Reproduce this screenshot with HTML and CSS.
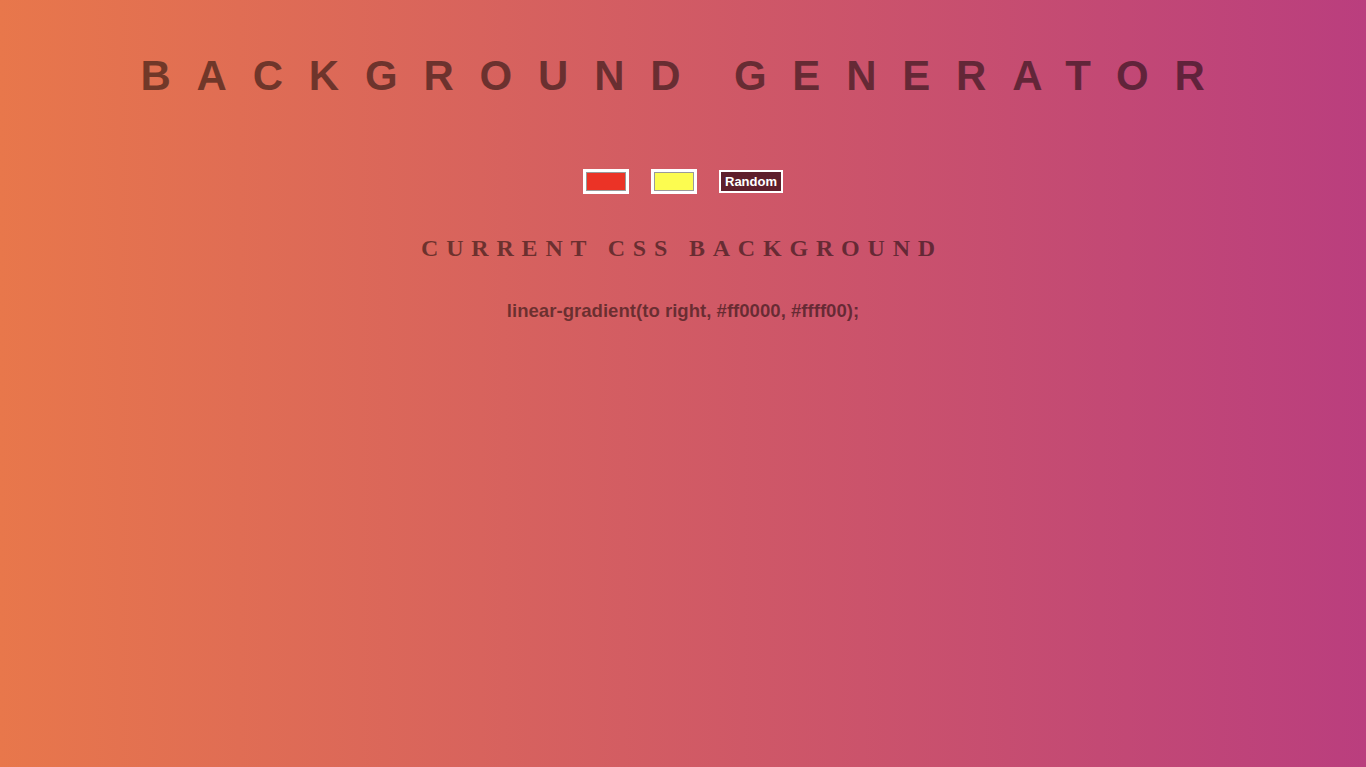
FILE: index.html
```html
<!DOCTYPE html>
<html lang="en">
<head>
<meta charset="utf-8">
<title>Background Generator</title>
<link rel="stylesheet" href="styles.css">
</head>
<body>
<main class="page">
  <h1 class="title">Background Generator</h1>
  <div class="controls">
    <input class="picker" type="color" name="color1" value="#eb3326">
    <input class="picker" type="color" name="color2" value="#fcfc50">
    <button class="random" type="button">Random</button>
  </div>
  <h2 class="subtitle">Current CSS Background</h2>
  <h3 class="code">linear-gradient(to right, #ff0000, #ffff00);</h3>
</main>
</body>
</html>
```

FILE: styles.css
```css
html, body {
  margin: 0;
  padding: 0;
  height: 100%;
}

body {
  background: linear-gradient(to right, #e8774b, #ba3e7e);
  font-family: "Liberation Sans", Arial, sans-serif;
  color: rgba(0, 0, 0, 0.5);
}

.page {
  display: flex;
  flex-direction: column;
  align-items: center;
  text-align: center;
  padding-top: 52px;
}

.title {
  margin: 0;
  font-size: 42px;
  font-weight: bold;
  line-height: 48px;
  letter-spacing: 25.8px;
  word-spacing: -10px;
  text-transform: uppercase;
  padding-left: 5px;
}

.controls {
  display: flex;
  align-items: center;
  gap: 22px;
  margin-top: 69px;
  height: 25px;
}

.picker {
  -webkit-appearance: none;
  appearance: none;
  width: 46px;
  height: 25px;
  padding: 3px 3px;
  margin: 0;
  border: none;
  background: #ffffff;
  box-sizing: border-box;
  cursor: pointer;
}

.picker::-webkit-color-swatch-wrapper {
  padding: 0;
}

.picker::-webkit-color-swatch {
  border: 1px solid #9a9a9a;
  border-radius: 0;
}

.random {
  width: 64px;
  height: 23px;
  margin: 0;
  padding: 0;
  box-sizing: border-box;
  border: 2px solid #ffffff;
  background: #5e1f2c;
  color: #ffffff;
  font-family: "Liberation Sans", Arial, sans-serif;
  font-size: 13px;
  font-weight: bold;
  line-height: 19px;
  cursor: pointer;
}

.subtitle {
  margin: 40px 0 0;
  font-family: "Liberation Serif", "Times New Roman", serif;
  font-size: 24px;
  font-weight: bold;
  line-height: 28px;
  letter-spacing: 7.8px;
  text-transform: uppercase;
  padding-right: 2px;
}

.code {
  margin: 38px 0 0;
  font-size: 18.6px;
  font-weight: bold;
  line-height: 21px;
}
```
